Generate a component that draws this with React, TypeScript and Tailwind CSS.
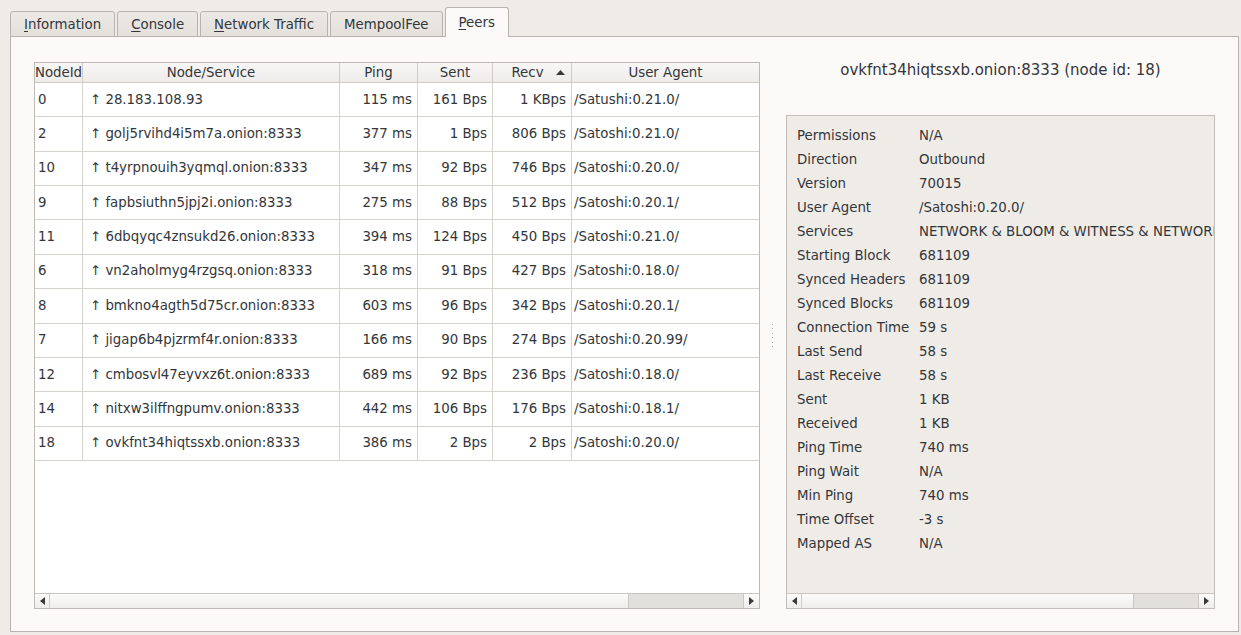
import React from "react";

const rows: [string, string, string, string, string, string][] = [
  ["0", "28.183.108.93", "115 ms", "161 Bps", "1 KBps", "/Satushi:0.21.0/"],
  ["2", "golj5rvihd4i5m7a.onion:8333", "377 ms", "1 Bps", "806 Bps", "/Satoshi:0.21.0/"],
  ["10", "t4yrpnouih3yqmql.onion:8333", "347 ms", "92 Bps", "746 Bps", "/Satoshi:0.20.0/"],
  ["9", "fapbsiuthn5jpj2i.onion:8333", "275 ms", "88 Bps", "512 Bps", "/Satoshi:0.20.1/"],
  ["11", "6dbqyqc4znsukd26.onion:8333", "394 ms", "124 Bps", "450 Bps", "/Satoshi:0.21.0/"],
  ["6", "vn2aholmyg4rzgsq.onion:8333", "318 ms", "91 Bps", "427 Bps", "/Satoshi:0.18.0/"],
  ["8", "bmkno4agth5d75cr.onion:8333", "603 ms", "96 Bps", "342 Bps", "/Satoshi:0.20.1/"],
  ["7", "jigap6b4pjzrmf4r.onion:8333", "166 ms", "90 Bps", "274 Bps", "/Satoshi:0.20.99/"],
  ["12", "cmbosvl47eyvxz6t.onion:8333", "689 ms", "92 Bps", "236 Bps", "/Satoshi:0.18.0/"],
  ["14", "nitxw3ilffngpumv.onion:8333", "442 ms", "106 Bps", "176 Bps", "/Satoshi:0.18.1/"],
  ["18", "ovkfnt34hiqtssxb.onion:8333", "386 ms", "2 Bps", "2 Bps", "/Satoshi:0.20.0/"],
];

const info: [string, string][] = [
  ["Permissions", "N/A"],
  ["Direction", "Outbound"],
  ["Version", "70015"],
  ["User Agent", "/Satoshi:0.20.0/"],
  ["Services", "NETWORK & BLOOM & WITNESS & NETWORK_LIMITED"],
  ["Starting Block", "681109"],
  ["Synced Headers", "681109"],
  ["Synced Blocks", "681109"],
  ["Connection Time", "59 s"],
  ["Last Send", "58 s"],
  ["Last Receive", "58 s"],
  ["Sent", "1 KB"],
  ["Received", "1 KB"],
  ["Ping Time", "740 ms"],
  ["Ping Wait", "N/A"],
  ["Min Ping", "740 ms"],
  ["Time Offset", "-3 s"],
  ["Mapped AS", "N/A"],
];

const grid = "grid grid-cols-[48px_257px_78px_75px_79px_1fr]";

function Tab({ label, u, selected }: { label: string; u?: number; selected?: boolean }) {
  const text =
    u === undefined ? (
      label
    ) : (
      <>
        {label.slice(0, u)}
        <span className="underline underline-offset-[2px]">{label[u]}</span>
        {label.slice(u + 1)}
      </>
    );
  if (selected) {
    return (
      <div className="h-[30px] px-[13px] pt-[5px] border border-b-0 border-[#b7b3ae] rounded-t-[3px] bg-[#fcfaf8] relative z-10">
        {text}
      </div>
    );
  }
  return (
    <div className="h-[26px] px-[13px] pt-[3px] border border-[#b7b3ae] rounded-t-[3px] bg-gradient-to-b from-[#ece9e5] to-[#e4e0dc]">
      {text}
    </div>
  );
}

function Arrow({ dir }: { dir: "l" | "r" }) {
  return (
    <svg width="5" height="8" viewBox="0 0 5 8">
      {dir === "l" ? <path d="M5 0 L0 4 L5 8 Z" fill="#3a3a3a" /> : <path d="M0 0 L5 4 L0 8 Z" fill="#3a3a3a" />}
    </svg>
  );
}

function HScroll({ handle }: { handle: number }) {
  return (
    <div className="h-[15px] flex border-t border-[#c9c5c0] bg-gradient-to-b from-[#fbfbfa] to-[#eeedeb] shrink-0">
      <div className="w-[15px] flex items-center justify-center border-r border-[#d0ccc7]">
        <Arrow dir="l" />
      </div>
      <div className="flex-1" />
      <div
        className="bg-[#e2e0dc] border-l border-r border-[#cbc7c2]"
        style={{ width: handle }}
      />
      <div className="w-[15px] flex items-center justify-center">
        <Arrow dir="r" />
      </div>
    </div>
  );
}

export default function App() {
  return (
    <div
      className="w-[1241px] h-[635px] bg-[#efebe7] text-[#33363a] text-[13.33px] overflow-hidden"
      style={{ fontFamily: '"DejaVu Sans", Verdana, sans-serif' }}
    >
      <div className="h-[37px] -mb-px flex items-end gap-[2px] pl-[10px] relative z-10">
        <Tab label="Information" u={0} />
        <Tab label="Console" u={0} />
        <Tab label="Network Traffic" u={0} />
        <Tab label="MempoolFee" />
        <Tab label="Peers" u={0} selected />
      </div>
      <div className="ml-[10px] w-[1229px] h-[596px] border border-[#b7b3ae] bg-[#fcfaf8] pl-[23px] pr-[23px] pt-[25px] pb-[22px] flex">
        {/* Peer table */}
        <div className="w-[726px] border border-[#bdb9b4] bg-white flex flex-col">
          <div className={`${grid} h-[20px] border-b border-[#cfcbc6] bg-gradient-to-b from-[#f7f6f4] to-[#efedea]`}>
            <div className="border-r border-[#cfcbc6] flex items-center justify-center">NodeId</div>
            <div className="border-r border-[#cfcbc6] flex items-center justify-center">Node/Service</div>
            <div className="border-r border-[#cfcbc6] flex items-center justify-center">Ping</div>
            <div className="border-r border-[#cfcbc6] flex items-center justify-center">Sent</div>
            <div className="border-r border-[#cfcbc6] flex items-center">
              <span className="flex-1 text-center pl-[6px]">Recv</span>
              <svg width="9" height="5" viewBox="0 0 9 5" className="mr-[6px]">
                <path d="M0 5 L4.5 0 L9 5 Z" fill="#3a3a3a" />
              </svg>
            </div>
            <div className="flex items-center justify-center">User Agent</div>
          </div>
          {rows.map((r) => (
            <div key={r[0]} className={`${grid} h-[34.36px] border-b border-[#d6d3cf] whitespace-nowrap`}>
              <div className="border-r border-[#d6d3cf] flex items-center pl-[3px]">{r[0]}</div>
              <div className="border-r border-[#d6d3cf] flex items-center pl-[7px]">↑ {r[1]}</div>
              <div className="border-r border-[#d6d3cf] flex items-center justify-end pr-[5px]">{r[2]}</div>
              <div className="border-r border-[#d6d3cf] flex items-center justify-end pr-[5px]">{r[3]}</div>
              <div className="border-r border-[#d6d3cf] flex items-center justify-end pr-[5px]">{r[4]}</div>
              <div className="flex items-center pl-[2px]">{r[5]}</div>
            </div>
          ))}
          <div className="flex-1" />
          <HScroll handle={116} />
        </div>

        {/* Splitter */}
        <div className="w-[26px] flex items-center justify-center">
          <div className="flex flex-col gap-[3.4px] -ml-[1px]">
            {[0, 1, 2, 3, 4, 5].map((i) => (
              <div key={i} className="w-[1px] h-[1px] bg-[#a9a5a0]" />
            ))}
          </div>
        </div>

        {/* Details */}
        <div className="flex-1 flex flex-col min-w-0">
          <div className="h-[53px] text-center text-[15px] leading-[17px] whitespace-nowrap">
            ovkfnt34hiqtssxb.onion:8333 (node id: 18)
          </div>
          <div className="flex-1 border border-[#c2beb9] bg-[#efece8] flex flex-col min-h-0">
            <div className="flex-1 overflow-hidden pl-[10px] pt-[8px]">
              {info.map(([k, v]) => (
                <div key={k} className="h-[24px] flex items-center whitespace-nowrap">
                  <div className="w-[122px] shrink-0">{k}</div>
                  <div>{v}</div>
                </div>
              ))}
            </div>
            <HScroll handle={66} />
          </div>
        </div>
      </div>
    </div>
  );
}
